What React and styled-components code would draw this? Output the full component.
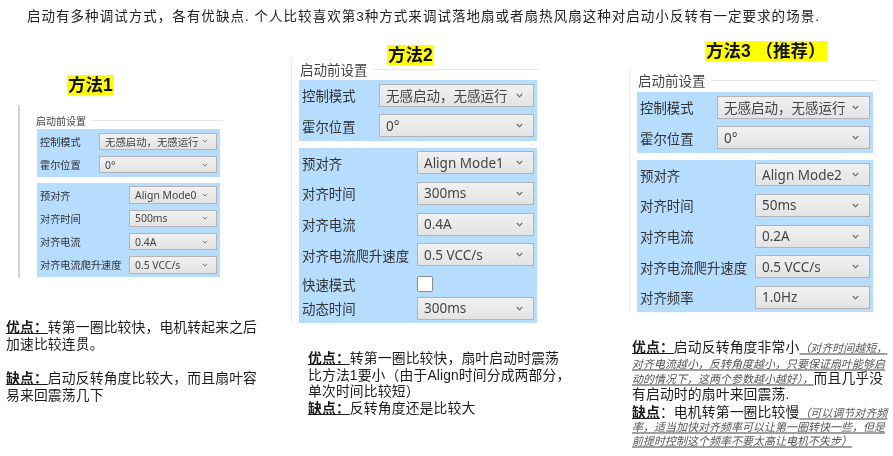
import React from "react";
import styled, { createGlobalStyle } from "styled-components";

const GlobalStyle = createGlobalStyle`
  html, body {
    margin: 0;
    padding: 0;
    background: #fff;
  }
  body {
    font-family: "Liberation Sans", "Noto Sans CJK SC", sans-serif;
    color: #111;
  }
`;

const Page = styled.div`
  width: 893px;
  height: 456px;
  overflow: hidden;
`;

const Intro = styled.div`
  height: 32px;
  padding-left: 27px;
  font-size: 13.5px;
  letter-spacing: 1.03px;
  line-height: 33px;
  white-space: nowrap;
  color: #222;
  filter: blur(0.25px);
`;

const Columns = styled.div`
  display: grid;
  grid-template-columns: 285px 340px 268px;
`;

const Column = styled.div`
  padding-top: ${(p) => p.$top}px;
  min-width: 0;
`;

const TitleRow = styled.div`
  height: 20px;
  padding-left: ${(p) => p.$left}px;
  margin-bottom: ${(p) => p.$after}px;
`;

const Title = styled.span`
  display: inline-block;
  height: 20px;
  padding: 0 1px;
  background: #ffff00;
  font-weight: 700;
  font-size: 17.5px;
  line-height: 20px;
  white-space: pre;
  color: #111;
  filter: blur(0.3px);
`;

const Edge = styled.div`
  margin-left: 18px;
  padding: 7px 0 1px 11px;
  width: 202px;
  border-left: 2px solid #d4d4d4;
`;

const Panel = styled.div`
  filter: blur(0.45px);
  margin-left: ${(p) => p.$left}px;
  width: ${(p) => p.$width}px;
  ${(p) => (p.$frame ? "border-left: 1px solid #e8ecf0; border-top-left-radius: 4px;" : "")}
`;

const Header = styled.div`
  display: flex;
  align-items: center;
  gap: 5px;
  height: ${(p) => p.$height}px;
  padding-left: ${(p) => p.$indent}px;
`;

const Legend = styled.span`
  font-size: ${(p) => (p.$small ? 10 : 13.5)}px;
  white-space: nowrap;
  color: #444;
`;

const HeaderLine = styled.span`
  flex: 1;
  height: 1px;
  background: #e4e8ee;
`;

const Group = styled.div`
  display: flex;
  flex-direction: column;
  gap: ${(p) => (p.$small ? 5.8 : 7.7)}px;
  margin: ${(p) => p.$after || 0}px ${(p) => p.$right || 0}px 0 ${(p) => p.$indent || 0}px;
  padding: 3.5px 3px;
  background: #b6dcfe;
`;

const Row = styled.div`
  display: grid;
  grid-template-columns: ${(p) => p.$label}px 1fr;
  align-items: center;
  height: ${(p) => p.$height || (p.$small ? 17.5 : 23)}px;
`;

const RowLabel = styled.span`
  font-size: ${(p) => (p.$small ? 10.2 : 13.4)}px;
  white-space: nowrap;
  color: #333;
`;

const Select = styled.div`
  display: flex;
  align-items: center;
  justify-content: space-between;
  height: 100%;
  box-sizing: border-box;
  padding: 0 ${(p) => (p.$small ? 8 : 10)}px 0 ${(p) => (p.$small ? 5 : 6)}px;
  background: linear-gradient(#f1f1f1, #e3e3e3);
  border: 1px solid #b4b4b4;
  font-family: "Noto Sans", "Noto Sans CJK SC", sans-serif;
  font-size: ${(p) => (p.$small ? 10.4 : 13.5)}px;
  white-space: nowrap;
  color: #444;
`;

const Chevron = styled.svg`
  flex: none;
  width: ${(p) => (p.$small ? 6 : 7)}px;
  height: ${(p) => (p.$small ? 4 : 5)}px;
  fill: none;
  stroke: #666;
  stroke-width: 1.1;
`;

const CheckBox = styled.span`
  display: block;
  width: 14px;
  height: 14px;
  background: #fff;
  border: 1px solid #8c8c8c;
  border-radius: 2px;
`;

const Notes = styled.div`
  margin-top: ${(p) => p.$top}px;
  padding-left: ${(p) => p.$left}px;
  filter: blur(0.25px);
`;

const Line = styled.div`
  height: ${(p) => p.$height || 16.6}px;
  line-height: ${(p) => p.$height || 16.6}px;
  margin-top: ${(p) => p.$before || 0}px;
  font-size: 13.8px;
  letter-spacing: 0.15px;
  white-space: nowrap;
  color: #1c1c1c;
`;

const Key = styled.span`
  font-weight: 700;
  text-decoration: underline;
`;

const Aside = styled.span`
  font-size: 11px;
  font-style: italic;
  letter-spacing: 0;
  color: #555;
  text-decoration: underline;
  text-decoration-color: #a0a0a0;
  text-decoration-thickness: 1.5px;
`;

const Field = ({ label, value, small, labelWidth }) => (
  <Row $label={labelWidth} $small={small}>
    <RowLabel $small={small}>{label}</RowLabel>
    <Select $small={small}>
      <span>{value}</span>
      <Chevron $small={small} viewBox="0 0 7 5">
        <polyline points="0.8,1 3.5,3.8 6.2,1" />
      </Chevron>
    </Select>
  </Row>
);

const CheckField = ({ label, labelWidth }) => (
  <Row $label={labelWidth} $height={15}>
    <RowLabel>{label}</RowLabel>
    <CheckBox />
  </Row>
);

const MotorGroup = ({ small, labelWidth, indent, right }) => (
  <Group $small={small} $indent={indent} $right={right}>
    <Field small={small} labelWidth={labelWidth} label="控制模式" value="无感启动，无感运行" />
    <Field small={small} labelWidth={labelWidth} label="霍尔位置" value="0°" />
  </Group>
);

export default function App() {
  return (
    <Page>
      <GlobalStyle />
      <Intro>启动有多种调试方式，各有优缺点. 个人比较喜欢第3种方式来调试落地扇或者扇热风扇这种对启动小反转有一定要求的场景.</Intro>
      <Columns>
        <Column $top={43}>
          <TitleRow $left={67} $after={10}>
            <Title>方法1</Title>
          </TitleRow>
          <Edge>
            <Panel $left={0} $width={192}>
              <Header $height={17} $indent={5}>
                <Legend $small>启动前设置</Legend>
                <HeaderLine />
              </Header>
              <MotorGroup small labelWidth={59} indent={6} right={3} />
              <Group $small $indent={6} $right={3} $after={6}>
                <Field small labelWidth={89} label="预对齐" value="Align Mode0" />
                <Field small labelWidth={89} label="对齐时间" value="500ms" />
                <Field small labelWidth={89} label="对齐电流" value="0.4A" />
                <Field small labelWidth={89} label="对齐电流爬升速度" value="0.5 VCC/s" />
              </Group>
            </Panel>
          </Edge>
          <Notes $top={42} $left={6}>
            <Line><Key>优点：</Key>转第一圈比较快，电机转起来之后</Line>
            <Line>加速比较连贯。</Line>
            <Line $before={18}><Key>缺点：</Key>启动反转角度比较大，而且扇叶容</Line>
            <Line>易来回震荡几下</Line>
          </Notes>
        </Column>

        <Column $top={13}>
          <TitleRow $left={102} $after={-7}>
            <Title>方法2</Title>
          </TitleRow>
          <Panel $left={6} $width={247} $frame>
            <Header $height={22} $indent={8}>
              <Legend>启动前设置</Legend>
              <HeaderLine />
            </Header>
            <MotorGroup labelWidth={77} indent={7} right={2} />
            <Group $after={7} $indent={7} $right={2}>
              <Field labelWidth={115} label="预对齐" value="Align Mode1" />
              <Field labelWidth={115} label="对齐时间" value="300ms" />
              <Field labelWidth={115} label="对齐电流" value="0.4A" />
              <Field labelWidth={115} label="对齐电流爬升速度" value="0.5 VCC/s" />
              <CheckField labelWidth={115} label="快速模式" />
              <Field labelWidth={115} label="动态时间" value="300ms" />
            </Group>
          </Panel>
          <Notes $top={28} $left={23}>
            <Line><Key>优点：</Key>转第一圈比较快，扇叶启动时震荡</Line>
            <Line>比方法1要小（由于Align时间分成两部分，</Line>
            <Line>单次时间比较短）</Line>
            <Line><Key>缺点：</Key>反转角度还是比较大</Line>
          </Notes>
        </Column>

        <Column $top={9}>
          <TitleRow $left={80} $after={7}>
            <Title>方法3 （推荐）</Title>
          </TitleRow>
          <Panel $left={4} $width={248} $frame>
            <Header $height={24} $indent={8}>
              <Legend>启动前设置</Legend>
              <HeaderLine />
            </Header>
            <MotorGroup labelWidth={77} indent={7} right={5} />
            <Group $after={7} $indent={7} $right={5}>
              <Field labelWidth={115} label="预对齐" value="Align Mode2" />
              <Field labelWidth={115} label="对齐时间" value="50ms" />
              <Field labelWidth={115} label="对齐电流" value="0.2A" />
              <Field labelWidth={115} label="对齐电流爬升速度" value="0.5 VCC/s" />
              <Field labelWidth={115} label="对齐频率" value="1.0Hz" />
            </Group>
          </Panel>
          <Notes $top={28} $left={7}>
            <Line $height={15.4}><Key>优点：</Key>启动反转角度非常小<Aside>（对齐时间越短，</Aside></Line>
            <Line $height={15.4}><Aside>对齐电流越小，反转角度越小，只要保证扇叶能够启</Aside></Line>
            <Line $height={15.4}><Aside>动的情况下，这两个参数越小越好），</Aside>而且几乎没</Line>
            <Line $height={15.4}>有启动时的扇叶来回震荡.</Line>
            <Line $height={15.4} $before={3}><Key>缺点</Key>：电机转第一圈比较慢<Aside>（可以调节对齐频</Aside></Line>
            <Line $height={13.5}><Aside>率，适当加快对齐频率可以让第一圈转快一些，但是</Aside></Line>
            <Line $height={13.5}><Aside>前提时控制这个频率不要太高让电机不失步）</Aside></Line>
          </Notes>
        </Column>
      </Columns>
    </Page>
  );
}
